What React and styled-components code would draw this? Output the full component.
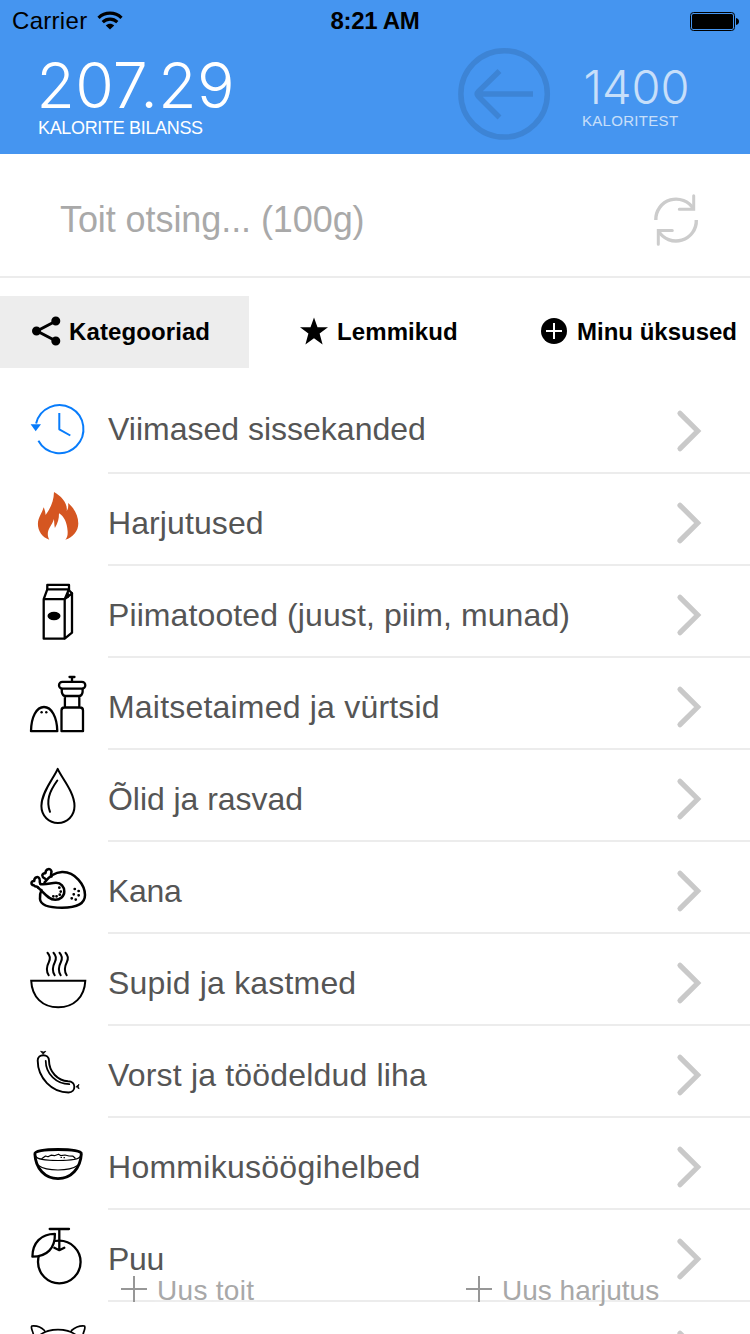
import React from 'react';
import styled, { createGlobalStyle } from 'styled-components';

const Global = createGlobalStyle`
  * { box-sizing: border-box; }
  body { margin: 0; background: #fff; }
`;

const Screen = styled.main`
  position: relative;
  width: 750px;
  height: 1334px;
  overflow: hidden;
  background: #fff;
  font-family: "Liberation Sans", Arial, sans-serif;
  display: flex;
  flex-direction: column;
`;

const Header = styled.header`
  flex: none;
  height: 154px;
  background: #4595f0;
`;

const StatusBar = styled.div`
  height: 40px;
  padding: 0 12px 0 12px;
  display: grid;
  grid-template-columns: 1fr auto 1fr;
  align-items: center;
  color: #000;
  font-size: 24px;
  line-height: 42px;
`;

const Carrier = styled.div`
  display: flex;
  align-items: center;
  gap: 10px;
  letter-spacing: 0.3px;
`;

const Clock = styled.div`
  font-weight: 700;
  letter-spacing: ${(p) => p.$tracking}px;
`;

const BatteryIcon = styled.svg`
  justify-self: end;
  margin-right: -2px;
  margin-top: -1px;
`;

const Summary = styled.div`
  display: flex;
  height: 114px;
  padding-left: 38px;
`;

const Stat = styled.div`
  color: #fff;
  opacity: ${(p) => p.$opacity || 1};
  width: ${(p) => p.$width}px;
  padding-top: ${(p) => p.$top}px;
`;

const Figure = styled.div`
  font-family: Inter, "Liberation Sans", sans-serif;
  font-weight: ${(p) => p.$weight};
  font-size: ${(p) => p.$size}px;
  line-height: ${(p) => p.$line}px;
  letter-spacing: ${(p) => p.$tracking}px;
  margin-left: ${(p) => p.$shift || 0}px;
  white-space: nowrap;
`;

const Caption = styled.div`
  font-size: ${(p) => p.$size}px;
  line-height: 20px;
  letter-spacing: ${(p) => p.$tracking}px;
  white-space: nowrap;
`;

const BackIcon = styled.svg`
  flex: none;
  margin-top: 7px;
  margin-right: 31px;
`;

const Search = styled.div`
  flex: none;
  height: 124px;
  padding: 0 51px 0 60px;
  display: flex;
  align-items: center;
  justify-content: space-between;
  border-bottom: 2px solid #ececec;
`;

const Placeholder = styled.span`
  padding-top: 9px;
  color: #a9a9a9;
  font-size: 36px;
  line-height: 44px;
  letter-spacing: ${(p) => p.$tracking}px;
`;

const RefreshIcon = styled.svg`
  margin-top: 8px;
`;

const Tabs = styled.nav`
  flex: none;
  display: flex;
  margin-top: 18px;
  height: 72px;
`;

const Tab = styled.div`
  width: ${(p) => p.$width}px;
  padding-left: ${(p) => p.$inset}px;
  display: flex;
  align-items: center;
  gap: ${(p) => p.$gap}px;
  background: ${(p) => (p.$active ? '#ededed' : 'transparent')};
  color: #000;
  font-size: 24px;
  font-weight: 700;
  letter-spacing: ${(p) => p.$tracking}px;
  white-space: nowrap;
`;

const TabIcon = styled.svg`
  flex: none;
  margin-top: -2px;
`;

const List = styled.div`
  flex: none;
  margin-top: 14px;
`;

const Row = styled.div`
  display: flex;
  height: 92px;
`;

const RowIcon = styled.svg`
  flex: none;
  width: 108px;
  height: 92px;
  fill: none;
  stroke: ${(p) => p.$color || '#000'};
  stroke-width: ${(p) => p.$stroke || 2.3};
  stroke-linecap: round;
  stroke-linejoin: round;
`;

const RowBody = styled.div`
  flex: 1;
  display: flex;
  justify-content: space-between;
  border-bottom: 2px solid #ececec;
`;

const Label = styled.span`
  padding-top: ${(p) => p.$top || 31}px;
  color: #555;
  font-size: 32px;
  line-height: 37px;
  letter-spacing: ${(p) => p.$tracking || 0}px;
  white-space: nowrap;
`;

const Chevron = styled.svg`
  flex: none;
  width: 76px;
  height: 90px;
  fill: none;
  stroke: #c9c9c9;
  stroke-width: 5.2;
  stroke-linecap: round;
`;

const Actions = styled.div`
  position: absolute;
  left: 0;
  right: 0;
  bottom: 0;
  height: 66px;
  padding-left: 108px;
  display: flex;
`;

const Action = styled.div`
  width: ${(p) => p.$width}px;
  padding-left: 13px;
  padding-top: 7px;
  display: flex;
  align-items: flex-start;
  gap: 10px;
  color: #a8a8a8;
  font-size: 28px;
  line-height: 32px;
  letter-spacing: ${(p) => p.$tracking}px;
  white-space: nowrap;
`;

const ActionText = styled.span`
  text-shadow: 0 0 14px rgba(255, 255, 255, 0.9);
`;

const steam = (x) => `M${x} 18.8c2.4 2.6 3.2 5.600 1.400 9.200c-2.400 4.600-3.400 8.400-.2 13.200`;

const icons = {
  history: (
    <>
      <path d="M36.100 41.500A24 24 0 1 1 38.400 58.700" strokeLinecap="butt" />
      <path d="M59.300 31V47.300L70.300 53.500" strokeLinecap="butt" />
      <path d="M30.600 42.300H41L35.700 49.300Z" fill="#087cfb" stroke="none" />
    </>
  ),
  fire: (
    <path
      d="M54 18C61 22 68 29 66.700 37C68.200 35 68.600 32 68 29C74 34 78.300 41 78.300 49.500C78.300 57 73 63.500 65.300 65.800C67.500 63 67.800 60.500 67.600 57C67.200 49 64 42 59 39.300C59 45 58 49 54.900 54C54.200 51 54.300 48 53.900 45C52.500 51 47.800 54 47.800 60C47.800 62.500 48.500 64.300 49.300 65.800C42 63 37.900 57 37.900 50C37.900 43.500 42.500 38.500 43.600 33.300C44.900 36 45.400 38.500 45.600 41C51 33.500 53.700 27 54 18Z"
      fill="#d55621"
      stroke="none"
    />
  ),
  milk: (
    <>
      <path d="M43.700 33.200H64.700V72.700H43.700ZM64.700 72.700L72 66.700V27.300L64.700 33.200L69 23.300H47.300L43.700 33.200" />
      <path d="M47.300 23.300V18.900H69V24.300L72 27.300M67.800 28V31" />
      <ellipse cx="54" cy="50" rx="6.500" ry="4.200" fill="#000" stroke="none" />
    </>
  ),
  spice: (
    <>
      <path d="M31 73.200H57.300C57 59 51.500 49 44 49S31.200 59 31 73.200Z" />
      <circle cx="41.600" cy="54.200" r="1.200" fill="#000" stroke="none" />
      <circle cx="46.300" cy="54.200" r="1.200" fill="#000" stroke="none" />
      <path d="M61.500 73.200V52.500Q61.500 49.500 64.500 49.500H80Q83 49.500 83 52.500V73.200ZM64.900 49.500V38.200M79.300 49.500V38.200M61.800 31V34Q62.500 38 65.500 38H79Q82 38 82.600 34V31" />
      <rect x="59" y="23.800" width="26.300" height="6.900" rx="3.400" />
      <path d="M72 23.500V19M69.500 19H74.500" />
    </>
  ),
  oil: (
    <>
      <path d="M57.700 18.900C61 27 74.500 42 74.500 56C74.500 66 67 72.900 58 72.900S41.400 66 41.400 56C41.400 42 54.500 27 57.700 18.900Z" />
      <path d="M57.300 30.500C49 42 46 51 50 61.800" />
    </>
  ),
  chicken: (
    <>
      <path d="M44.500 40.500C49 34.500 54 30.500 62 30C75 29.500 85 43 85 53C85 61 79 65.700 62 65.700C48 65.700 40.500 63.500 40 57C39.700 53.500 40 51 41.500 48" />
      <path d="M40.500 42C46 43 51 40.800 56 40.800C61 40.800 64.300 44.500 64.300 49.500S60 57.800 55.300 57.800C48 57.800 44 50.500 38 45.500" />
      <path d="M38 45.500C36.500 43 35.800 46 33.800 43.300C30.500 42.800 30.800 38.600 34.200 39C34.200 34.500 39 33.800 39.700 37.500C40.200 39.300 39 40.500 40.500 42M46 37.500C45 35.500 42.600 36.500 42.300 33.500C42.400 31.300 44 31.500 45.500 31C45.500 26.500 50.800 25.800 51.500 29.500C51.600 31 50.300 32 51.500 34.500" />
      <path d="M59.300 45.700h.1M60.700 49.600h.1M59.700 52.700h.1M56.500 54.300h.1M53.300 54.300h.1M74.700 47h.1M78.600 49h.1M73.700 52.300h.1M78.600 53.300h.1M71.700 56.300h.1M75.700 57.600h.1" strokeWidth="2.700" />
    </>
  ),
  soup: (
    <>
      <path d="M31.200 46.700H85.300C84.500 63 74 73.300 58.200 73.300S32 63 31.200 46.700Z" strokeLinejoin="miter" strokeWidth="2" />
      <path d={[47.5, 53.5, 59.5, 65.5].map(steam).join('')} strokeWidth="2" />
    </>
  ),
  sausage: (
    <>
      <path d="M37.700 34.600C37.700 27.400 48.900 27.400 49 34.600C49 46 58 54.800 68 55.200C76.500 55.200 76.300 66.300 68.500 66.500C52 66.500 37.700 52 37.700 34.600Z" strokeWidth="1.900" />
      <path d="M45.700 34.800C45.700 48 56.500 58.200 69.300 58.200" strokeWidth="1.700" />
      <path d="M41 25.300L43.300 26L45.800 25.300L43.300 28ZM76.300 60.500L79 58.300L78.300 60.500L79 62.500Z" fill="#000" strokeWidth=".8" />
    </>
  ),
  cereal: (
    <>
      <path d="M34.900 36C34.500 33 44 31.500 58 31.500S82 33 81.300 36C80.500 50.500 71 60.600 58 60.600S35.500 50.500 34.900 36Z" strokeWidth="2.900" />
      <path d="M36 38.500C38 43.800 78 43.800 80.200 38.500M38.500 47.500C47 53.500 69 53.500 77.500 47.500M42 40.500L45.500 38L48 38.800L51 37.200L54.500 37.700L58.500 36.200L61 37.700L65 37L69 38L73 38.200L75 40M61 39.500h.5M64 39.700h.5" strokeWidth="1.200" />
    </>
  ),
  fruit: (
    <>
      <circle cx="59.300" cy="52" r="21.300" />
      <path d="M32.400 46.700C32.400 33 41 23.800 54.900 23.800C55.300 38 47 46.700 32.400 46.700Z" fill="#fff" />
      <path d="M49.700 19H69M59.300 19V40M54.300 37.700L59.300 40.200L64.300 37.700" />
    </>
  ),
  pig: (
    <path d="M33.500 33C33 29 30.500 26.500 31.700 24C36 23.500 41.500 25.500 44.500 28.500M83 33C83.500 29 86 26.500 84.500 24C79.500 23.500 75 25.500 71.500 28.500M40 33C49 25.800 67 25.800 76 33" strokeWidth="1.700" />
  ),
};

const rows = [
  { icon: 'history', text: 'Viimased sissekanded', color: '#087cfb', stroke: 2, top: 29, tracking: 0 },
  { icon: 'fire', text: 'Harjutused', tracking: 0.1 },
  { icon: 'milk', text: 'Piimatooted (juust, piim, munad)', tracking: 0.1 },
  { icon: 'spice', text: 'Maitsetaimed ja vürtsid', tracking: 0.2 },
  { icon: 'oil', text: 'Õlid ja rasvad', stroke: 2, tracking: -0.05 },
  { icon: 'chicken', text: 'Kana', stroke: 2.5, tracking: -0.3 },
  { icon: 'soup', text: 'Supid ja kastmed', tracking: 0.18 },
  { icon: 'sausage', text: 'Vorst ja töödeldud liha', tracking: 0.18 },
  { icon: 'cereal', text: 'Hommikusöögihelbed', tracking: 0.27 },
  { icon: 'fruit', text: 'Puu', tracking: -0.3 },
  { icon: 'pig', text: '' },
];

const Plus = () => (
  <svg width="26" height="27" viewBox="0 0 26 27" stroke="#979797" strokeWidth="2">
    <path d="M0 14H26M13 1V27" />
  </svg>
);

export default function App() {
  return (
    <Screen>
      <Global />
      <Header>
        <StatusBar>
          <Carrier>
            Carrier
            <svg width="26" height="20" viewBox="0 0 26 20" fill="none" stroke="#000" strokeWidth="3.200">
              <path d="M1.500 6.800C8 .6 18 .6 24.500 6.800M5.700 11.200C10 7.200 16 7.200 20.300 11.200" />
              <path d="M13 18.500L8.800 14.500C11.300 12.200 14.700 12.200 17.200 14.500Z" fill="#000" stroke="none" />
            </svg>
          </Carrier>
          <Clock $tracking={-0.3}>8:21 AM</Clock>
          <BatteryIcon width="50" height="20" viewBox="0 0 50 20">
            <rect x=".5" y="1.500" width="44" height="18" rx="3" fill="none" stroke="#000" />
            <rect x="2" y="3" width="41" height="15" rx="1.500" />
            <path d="M46 7C50 7.500 50 13.500 46 14Z" />
          </BatteryIcon>
        </StatusBar>
        <Summary>
          <Stat $width={420} $top={13}>
            <Figure $weight={300} $size={62.5} $line={65} $tracking={0.3} $shift={-1.5}>207.29</Figure>
            <Caption $size={18} $tracking={-0.33}>KALORITE BILANSS</Caption>
          </Stat>
          <BackIcon width="93" height="94" viewBox="0 0 93 94" fill="none" stroke="#3d84d5" strokeWidth="5.500">
            <circle cx="46.100" cy="46.900" r="43.200" />
            <path d="M75 47H19M41.500 24L20.500 44.500Q18 47 20.500 49.500L41.500 70.500" />
          </BackIcon>
          <Stat $width={160} $top={23} $opacity={0.7}>
            <Figure $weight={300} $size={47} $line={48} $tracking={0} $shift={1.5}>1400</Figure>
            <Caption $size={15} $tracking={0.3}>KALORITEST</Caption>
          </Stat>
        </Summary>
      </Header>
      <Search>
        <Placeholder $tracking={-0.08}>Toit otsing... (100g)</Placeholder>
        <RefreshIcon width="48" height="54" viewBox="0 0 48 54" fill="none" stroke="#ccc" strokeWidth="3.400">
          <path d="M4.800 28A20.300 20.300 0 0 1 42.500 17M45.300 28A20.300 20.300 0 0 1 7.500 39" />
          <path d="M42.700 3.700V17.300H28.300M7.300 52.300V38.500H21.300" strokeLinecap="round" strokeLinejoin="miter" strokeWidth="3" />
        </RefreshIcon>
      </Search>
      <Tabs>
        <Tab $active $width={249} $inset={32} $gap={8} $tracking={0.1}>
          <TabIcon width="29" height="30" viewBox="0 0 29 30" stroke="#000" strokeWidth="3">
            <path d="M24 5L5 15L24 25" fill="none" />
            <circle cx="23.800" cy="5" r="3" />
            <circle cx="4.500" cy="15" r="3" />
            <circle cx="23.800" cy="25" r="3" />
          </TabIcon>
          Kategooriad
        </Tab>
        <Tab $width={291} $inset={51} $gap={9} $tracking={0.1}>
          <TabIcon width="28" height="28" viewBox="0 0 28 28">
            <path d="M14 .5L17.500 10.300H28L19.600 16.600L22.600 27.500L14 21.300L5.400 27.500L8.400 16.600L0 10.300H10.500Z" />
          </TabIcon>
          Lemmikud
        </Tab>
        <Tab $width={210} $inset={1} $gap={10} $tracking={0}>
          <TabIcon width="26" height="26" viewBox="0 0 26 26">
            <circle cx="13" cy="13" r="13" />
            <path d="M13 5V21M5 13H21" stroke="#fff" strokeWidth="2" />
          </TabIcon>
          Minu üksused
        </Tab>
      </Tabs>
      <List>
        {rows.map((r) => (
          <Row key={r.icon}>
            <RowIcon viewBox="0 0 108 92" $color={r.color} $stroke={r.stroke}>{icons[r.icon]}</RowIcon>
            <RowBody>
              <Label $top={r.top} $tracking={r.tracking}>{r.text}</Label>
              <Chevron viewBox="0 0 76 90">
                <path d="M6 31.300L23.700 49L6 66.700" />
              </Chevron>
            </RowBody>
          </Row>
        ))}
      </List>
      <Actions>
        <Action $width={345} $tracking={0.3}><Plus /><ActionText>Uus toit</ActionText></Action>
        <Action $width={220} $tracking={0}><Plus /><ActionText>Uus harjutus</ActionText></Action>
      </Actions>
    </Screen>
  );
}
